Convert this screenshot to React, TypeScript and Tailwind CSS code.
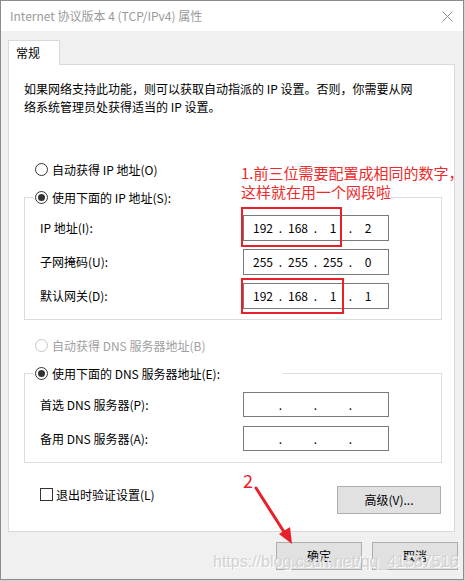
import { Fragment } from "react";

const font = "font-['Noto_Sans_CJK_SC','Noto_Sans',sans-serif]";

function Radio({ checked, disabled }: { checked?: boolean; disabled?: boolean }) {
  return (
    <span
      className={`flex h-[13px] w-[13px] shrink-0 items-center justify-center rounded-full border bg-white ${
        disabled ? "border-[#c4c4c4]" : "border-[#333333]"
      }`}
    >
      {checked && <span className="h-[7px] w-[7px] rounded-full bg-[#333333]" />}
    </span>
  );
}

function IpBox({ parts, tall }: { parts: string[]; tall?: boolean }) {
  return (
    <div
      className={`flex w-[146px] items-center border border-[#7a7a7a] bg-white pl-[4px] text-[12px] text-black ${
        tall ? "h-[26px]" : "h-[25px]"
      }`}
    >
      {parts.map((p, i) => (
        <Fragment key={i}>
          {i > 0 && <span className="w-[5px] text-center">.</span>}
          <span className="w-[30px] text-center">{p}</span>
        </Fragment>
      ))}
    </div>
  );
}

function Row({ label, parts, tall }: { label: string; parts: string[]; tall?: boolean }) {
  return (
    <div className="flex items-center">
      <span className="w-[203px] text-[12px]">{label}</span>
      <IpBox parts={parts} tall={tall} />
    </div>
  );
}

function Button({ children, className = "" }: { children: React.ReactNode; className?: string }) {
  return (
    <button
      type="button"
      className={`flex h-[28px] items-center justify-center border border-[#adadad] bg-[#e1e1e1] text-[12px] text-black ${className}`}
    >
      {children}
    </button>
  );
}

export default function App() {
  return (
    <div className={`relative h-[581px] w-[465px] bg-[#d4d4d4] ${font}`}>
      {/* 窗口 */}
      <div className="flex h-[580px] w-[464px] flex-col border border-[#8c8c8c] bg-[#f0f0f0]">
        {/* 标题栏 */}
        <div className="flex h-[30px] shrink-0 items-center justify-between bg-white pl-[9px] pr-[9px]">
          <span className="text-[12px] text-[#9a9a9a]">Internet 协议版本 4 (TCP/IPv4) 属性</span>
          <svg width="11" height="11" viewBox="0 0 11 11" className="mr-[1px]">
            <path d="M0.5 0.5 L10.5 10.5 M10.5 0.5 L0.5 10.5" stroke="#8a8a8a" strokeWidth="1" />
          </svg>
        </div>

        {/* 选项卡 */}
        <div className="pt-[9px]">
          <div className="relative z-10 -mb-px ml-[7px] flex h-[25px] w-[52px] items-start border-l border-r border-t border-[#d9d9d9] bg-white pl-[7px] pt-[3px] text-[12px] text-black">
            常规
          </div>
        </div>

        {/* 面板 */}
        <div className="ml-[7px] h-[468px] w-[447px] border border-[#d9d9d9] bg-white pl-[15px] pt-[15px] text-black">
          <p className="text-[12px] leading-[18px]">
            如果网络支持此功能，则可以获取自动指派的 IP 设置。否则，你需要从网
            <br />
            络系统管理员处获得适当的 IP 设置。
          </p>

          <div className="ml-[11px] mt-[44px] flex h-[19px] items-center gap-[4px] text-[12px]">
            <Radio />
            <span>自动获得 IP 地址(O)</span>
          </div>

          <fieldset className="mt-[9px] w-[418px] border border-[#dcdcdc] pb-[10px]">
            <legend className="ml-[8px] flex h-[19px] w-[208px] items-center gap-[4px] pl-[2px] text-[12px]">
              <Radio checked />
              <span>使用下面的 IP 地址(S):</span>
            </legend>
            <div className="mt-[8px] flex flex-col gap-[8px] pl-[15px]">
              <Row label="IP 地址(I):" parts={["192", "168", "1", "2"]} tall />
              <Row label="子网掩码(U):" parts={["255", "255", "255", "0"]} tall />
              <Row label="默认网关(D):" parts={["192", "168", "1", "1"]} tall />
            </div>
          </fieldset>

          <div className="ml-[11px] mt-[16px] flex h-[19px] items-center gap-[4px] text-[12px] text-[#a0a0a0]">
            <Radio disabled />
            <span>自动获得 DNS 服务器地址(B)</span>
          </div>

          <fieldset className="mt-[9px] w-[418px] border border-[#dcdcdc] pb-[11px]">
            <legend className="ml-[8px] flex h-[19px] w-[250px] items-center gap-[4px] pl-[2px] text-[12px]">
              <Radio checked />
              <span>使用下面的 DNS 服务器地址(E):</span>
            </legend>
            <div className="mt-[9px] flex flex-col gap-[9px] pl-[15px]">
              <Row label="首选 DNS 服务器(P):" parts={["", "", "", ""]} />
              <Row label="备用 DNS 服务器(A):" parts={["", "", "", ""]} />
            </div>
          </fieldset>

          <div className="mt-[22px] flex w-[418px] items-start justify-between">
            <div className="ml-[16px] flex h-[19px] items-center gap-[3px] text-[12px]">
              <span className="h-[13px] w-[13px] border border-[#333333] bg-white" />
              <span>退出时验证设置(L)</span>
            </div>
            <Button className="mr-[1px] mt-[1px] w-[104px]">高级(V)...</Button>
          </div>
        </div>

        {/* 底部按钮 */}
        <div className="mt-[10px] flex justify-end gap-[10px] pr-[5px]">
          <Button className="w-[86px]">确定</Button>
          <Button className="w-[86px]">取消</Button>
        </div>
      </div>

      {/* 标注 */}
      <div className="absolute left-[241px] top-[163px] text-[15px] leading-[19px] text-[#ee2a2a]">
        <div>1.前三位需要配置成相同的数字，</div>
        <div className="w-[150px] bg-white">这样就在用一个网段啦</div>
      </div>
      <div className="absolute left-[241px] top-[207px] h-[40px] w-[101px] border-2 border-[#e8202a]" />
      <div className="absolute left-[241px] top-[278px] h-[36px] w-[103px] border-2 border-[#e8202a]" />

      <div className="absolute left-[243px] top-[469px] text-[18px] leading-[22px] text-[#e8202a]">2</div>
      <svg className="absolute left-0 top-0" width="465" height="581" viewBox="0 0 465 581">
        <path d="M256 488 L286 535" stroke="#e8202a" strokeWidth="3" strokeLinecap="round" />
        <path d="M292 544 L279 534 L290 527 Z" fill="#e8202a" />
      </svg>

      <div className="absolute left-[213px] top-[552px] font-['Liberation_Sans',Arial,sans-serif] text-[16px] leading-[20px] text-[#d2d2d2] [text-shadow:1px_1px_0_#ffffff]">
        https://blog.csdn.net/qq_41587516
      </div>
    </div>
  );
}
